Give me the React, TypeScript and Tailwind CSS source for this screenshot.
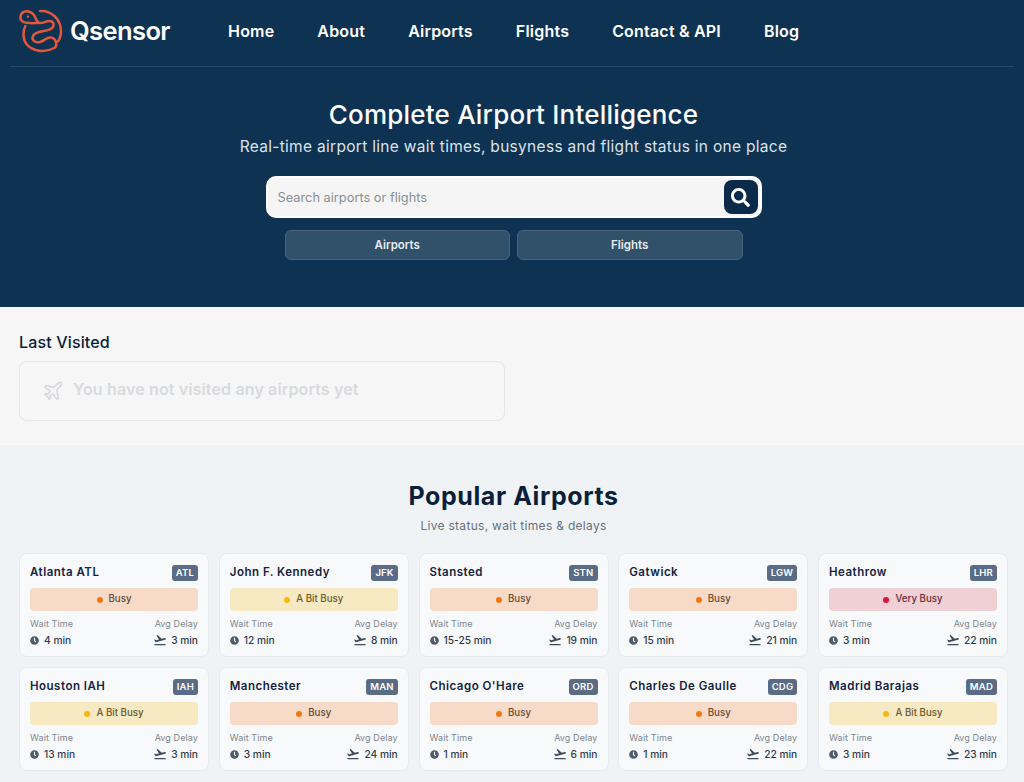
import { FaClock, FaSearch } from 'react-icons/fa';
import { MdFlightTakeoff } from 'react-icons/md';
import { Plane } from 'lucide-react';

const FONT = 'font-["Inter","Liberation_Sans",sans-serif]';

const NAV = ['Home', 'About', 'Airports', 'Flights', 'Contact & API', 'Blog'];

type Status = 'Busy' | 'A Bit Busy' | 'Very Busy';

const STATUS: Record<Status, { box: string; dot: string; text: string }> = {
  Busy: { box: 'bg-[#f7dbc8]', dot: 'bg-[#f07a12]', text: 'text-[#6b4a35]' },
  'A Bit Busy': { box: 'bg-[#f7e9c2]', dot: 'bg-[#f2b90f]', text: 'text-[#6b5a30]' },
  'Very Busy': { box: 'bg-[#f0d0d4]', dot: 'bg-[#dc143c]', text: 'text-[#6b2c38]' },
};

const AIRPORTS: { name: string; code: string; status: Status; wait: string; delay: string }[] = [
  { name: 'Atlanta ATL', code: 'ATL', status: 'Busy', wait: '4 min', delay: '3 min' },
  { name: 'John F. Kennedy', code: 'JFK', status: 'A Bit Busy', wait: '12 min', delay: '8 min' },
  { name: 'Stansted', code: 'STN', status: 'Busy', wait: '15-25 min', delay: '19 min' },
  { name: 'Gatwick', code: 'LGW', status: 'Busy', wait: '15 min', delay: '21 min' },
  { name: 'Heathrow', code: 'LHR', status: 'Very Busy', wait: '3 min', delay: '22 min' },
  { name: 'Houston IAH', code: 'IAH', status: 'A Bit Busy', wait: '13 min', delay: '3 min' },
  { name: 'Manchester', code: 'MAN', status: 'Busy', wait: '3 min', delay: '24 min' },
  { name: "Chicago O'Hare", code: 'ORD', status: 'Busy', wait: '1 min', delay: '6 min' },
  { name: 'Charles De Gaulle', code: 'CDG', status: 'Busy', wait: '1 min', delay: '22 min' },
  { name: 'Madrid Barajas', code: 'MAD', status: 'A Bit Busy', wait: '3 min', delay: '23 min' },
];

function Logo() {
  return (
    <svg viewBox="0 0 150 150" className="w-[50px] h-[50px] shrink-0" fill="none" stroke="#e2583a" strokeWidth="7.500" strokeLinecap="round" strokeLinejoin="round">
      <path d="M72 15C105 12 135 40 135 75C135 88 132 98 126 106" />
      <path d="M28 60C20 75 20 100 32 115C48 135 85 142 115 126C125 120 122 100 108 95C95 90 85 105 72 108C55 112 45 100 52 88C60 75 85 78 102 70C118 62 115 45 100 45C88 45 78 55 68 50C60 45 60 35 52 25C42 12 20 12 14 28C10 42 20 50 32 50C45 52 55 52 68 50" />
      <circle cx="36" cy="32" r="3.500" fill="#e2583a" stroke="none" />
    </svg>
  );
}

function Header() {
  return (
    <div className="bg-[#0e3252] h-[307px] flex flex-col">
      <div className="mx-[10px] h-[67px] border-b border-[#2a4a68] flex items-center pl-[6px] pb-[4px]">
        <Logo />
        <span className="ml-[4px] w-[158px] text-[25.500px] font-semibold tracking-[-0.6px] text-white">Qsensor</span>
        <nav className="flex items-center gap-[43px] text-[16px] font-semibold tracking-[0.2px] text-white">
          {NAV.map((n) => (
            <span key={n}>{n}</span>
          ))}
        </nav>
      </div>
      <div className="pl-[3px] flex flex-col">
        <h1 className="mt-[30px] text-center text-[26px] leading-[36px] font-medium tracking-[0.2px] text-white">
          Complete Airport Intelligence
        </h1>
        <p className="mt-[3px] text-center text-[15.500px] leading-[22px] tracking-[0.3px] text-[#dbe3ea]">
          Real-time airport line wait times, busyness and flight status in one place
        </p>
        <div className="mt-[18px] mx-auto w-[496px] h-[42px] bg-[#f5f5f5] border-2 border-white rounded-[10px] flex items-center justify-between pl-[10px] pr-[2px]">
          <span className="pt-[1px] text-[12.800px] text-[#8a8f94]">Search airports or flights</span>
          <button className="w-[34px] h-[34px] rounded-[8px] bg-[#0b2a4a] flex items-center justify-center text-white">
            <FaSearch className="w-[19px] h-[19px]" />
          </button>
        </div>
        <div className="mt-[12px] mx-auto w-[458px] grid grid-cols-2 gap-[7px]">
          <div className="h-[30px] pt-[1px] rounded-[6px] bg-[#315069] border border-[#47647c] flex items-center justify-center text-[11.500px] font-semibold text-[#e6ecf1]">Airports</div>
          <div className="h-[30px] pt-[1px] rounded-[6px] bg-[#315069] border border-[#47647c] flex items-center justify-center text-[11.500px] font-semibold text-[#e6ecf1]">Flights</div>
        </div>
      </div>
    </div>
  );
}

function LastVisited() {
  return (
    <div className="bg-[#f6f6f7] h-[138px] px-[19px] pt-[25px]">
      <h2 className="text-[16px] leading-[20px] font-medium tracking-[0.15px] text-[#0b1f3a]">Last Visited</h2>
      <div className="mt-[9px] w-[486px] h-[60px] rounded-[8px] border border-[#e6e7e9] flex items-center pl-[22px]">
        <Plane className="w-[22px] h-[22px] text-[#d4d6d9]" strokeWidth={1.6} />
        <span className="ml-[9px] pb-[4px] text-[16px] font-semibold tracking-[0.14px] text-[#d9dadc]">You have not visited any airports yet</span>
      </div>
    </div>
  );
}

function AirportCard({ a }: { a: (typeof AIRPORTS)[number] }) {
  const s = STATUS[a.status];
  return (
    <div className="h-[104px] rounded-[8px] bg-[#f8f9fa] border border-[#e8eaed] px-[10px] pt-[11px]">
      <div className="flex items-center justify-between h-[16px]">
        <span className="text-[11.500px] font-semibold tracking-[0.5px] text-[#14233f] whitespace-nowrap">{a.name}</span>
        <span className="h-[16px] px-[4px] rounded-[3px] bg-[#5a6b85] text-white text-[9.500px] font-semibold tracking-[0.2px] flex items-center">{a.code}</span>
      </div>
      <div className={`mt-[7px] h-[23px] rounded-[4px] flex items-center justify-center gap-[6px] ${s.box}`}>
        <span className={`w-[6px] h-[6px] rounded-full ${s.dot}`} />
        <span className={`text-[9.700px] font-medium ${s.text}`}>{a.status}</span>
      </div>
      <div className="mt-[6px] flex justify-between text-[9px] tracking-[0.1px] text-[#7f8790]">
        <span>Wait Time</span>
        <span>Avg Delay</span>
      </div>
      <div className="mt-[2px] flex justify-between items-center text-[10.200px] font-medium text-[#2f3b4c]">
        <span className="flex items-center gap-[5px]">
          <FaClock className="w-[9px] h-[9px] text-[#4e5b6b]" />
          {a.wait}
        </span>
        <span className="flex items-center gap-[4px]">
          <MdFlightTakeoff className="w-[14px] h-[14px] text-[#3f4c5c]" />
          {a.delay}
        </span>
      </div>
    </div>
  );
}

function Popular() {
  return (
    <div className="bg-[#f0f3f6] h-[337px] pl-[19px] pr-[16px] pt-[35px]">
      <h2 className="text-center text-[25px] leading-[32px] font-bold tracking-[0.6px] text-[#0b1f3a]">Popular Airports</h2>
      <p className="mt-[5px] text-center text-[12px] leading-[18px] tracking-[0.3px] text-[#68717b]">Live status, wait times &amp; delays</p>
      <div className="mt-[18px] grid grid-cols-5 gap-x-[9.750px] gap-y-[10px]">
        {AIRPORTS.map((a) => (
          <AirportCard key={a.code} a={a} />
        ))}
      </div>
    </div>
  );
}

export default function App() {
  return (
    <div className={`${FONT} h-[782px] overflow-hidden`}>
      <Header />
      <LastVisited />
      <Popular />
    </div>
  );
}
